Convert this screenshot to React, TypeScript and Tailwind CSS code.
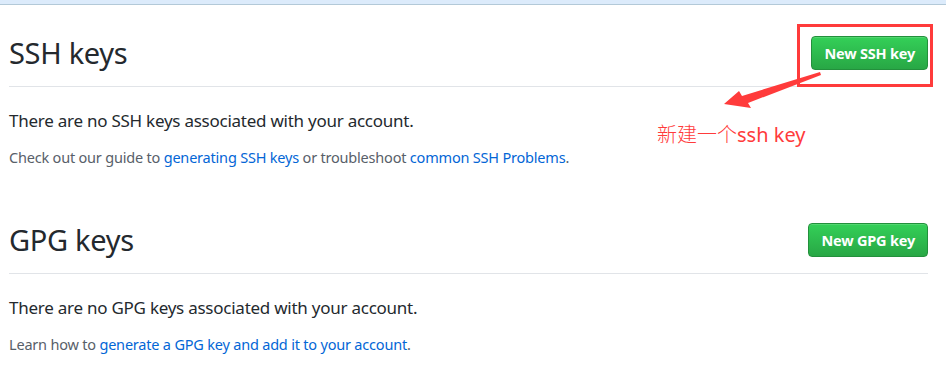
import React from "react";

const font = { fontFamily: '"Noto Sans", "Open Sans", Arial, sans-serif' };

function GreenButton({ label }: { label: string }) {
  return (
    <button
      className="h-[34px] px-[12px] rounded-[4px] border border-[#23903c] bg-gradient-to-b from-[#34d058] to-[#28a745] text-white font-bold text-[14.5px] leading-none tracking-[-0.2px] shadow-[inset_0_1px_0_rgba(255,255,255,0.15)]"
    >
      {label}
    </button>
  );
}

function Section({
  title,
  button,
  empty,
  children,
  first,
}: {
  title: string;
  button: string;
  empty: string;
  children: React.ReactNode;
  first?: boolean;
}) {
  return (
    <section className={first ? "mt-[31px]" : "mt-[56px]"}>
      <div className="flex items-center justify-between border-b border-[#e1e4e8] pb-[16px]">
        <h2 className="text-[29px] leading-[34px] font-normal text-[#24292e] tracking-[-0.3px]">{title}</h2>
        <GreenButton label={button} />
      </div>
      <p className="mt-[22px] text-[17px] leading-6 text-[#24292e] tracking-[-0.25px]">{empty}</p>
      <p className="mt-[14px] text-[14.5px] leading-5 text-[#586069] tracking-[-0.2px]">{children}</p>
    </section>
  );
}

export default function App() {
  return (
    <div className="relative w-[946px] h-[369px] bg-white overflow-hidden" style={font}>
      <div className="h-[5px] bg-[#dcebfb] border-b border-[#b3c9d8]" />
      <div className="pl-[9px] pr-[18px]">
        <Section
          first
          title="SSH keys"
          button="New SSH key"
          empty="There are no SSH keys associated with your account."
        >
          Check out our guide to <a className="text-[#0366d6]">generating SSH keys</a> or troubleshoot{" "}
          <a className="text-[#0366d6]">common SSH Problems</a>.
        </Section>
        <Section
          title="GPG keys"
          button="New GPG key"
          empty="There are no GPG keys associated with your account."
        >
          Learn how to <a className="text-[#0366d6]">generate a GPG key and add it to your account</a>.
        </Section>
      </div>

      {/* annotation overlay */}
      <div className="absolute left-[797px] top-[24px] w-[136px] h-[63px] border-[3px] border-[#ff3b3b]" />
      <svg className="absolute left-0 top-0" width="946" height="369" viewBox="0 0 946 369">
        <polygon
          points="724,104 739,91 742,96 820,72 821,75 748,103 751,108"
          fill="#ff3b3b"
        />
      </svg>
      <div
        className="absolute left-[657px] top-[120px] text-[20px] leading-[28px] text-[#ff3b3b]"
        style={{ fontFamily: '"Noto Sans", "Noto Sans CJK SC", sans-serif' }}
      >
        <span style={{ fontFamily: '"Noto Sans CJK SC", sans-serif', fontWeight: 300 }}>新建一个</span>ssh key
      </div>
    </div>
  );
}
